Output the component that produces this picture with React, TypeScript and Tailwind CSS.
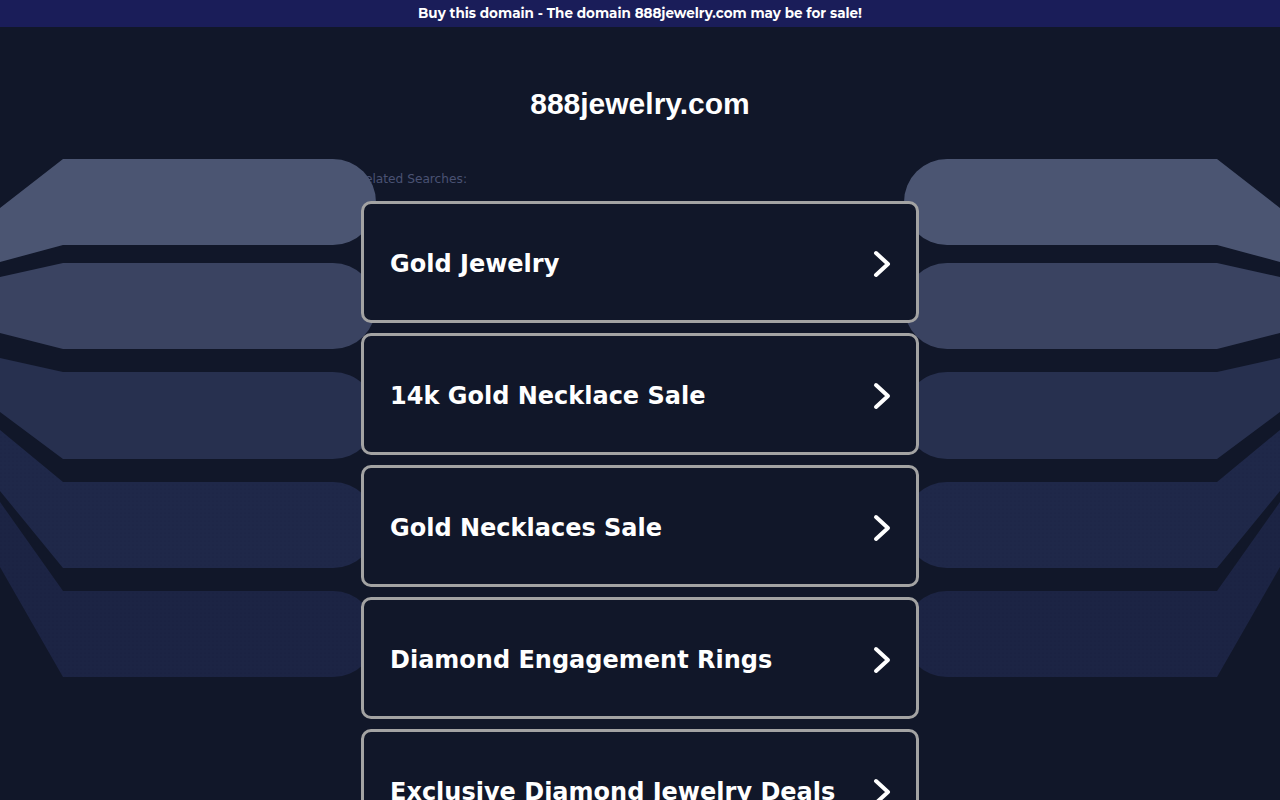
const searches = [
  "Gold Jewelry",
  "14k Gold Necklace Sale",
  "Gold Necklaces Sale",
  "Diamond Engagement Rings",
  "Exclusive Diamond Jewelry Deals",
];

// left-hand bands; the right side is the same set mirrored
const bands = [
  { d: "M0,208 L63,159 L333,159 A43,43 0 0 1 333,245 L63,245 L0,262 Z", fill: "#4b5572" },
  { d: "M0,277 L63,263 L333,263 A43,43 0 0 1 333,349 L63,349 L0,333 Z", fill: "#3a4361" },
  { d: "M0,358 L63,372 L333,372 A43.5,43.5 0 0 1 333,459 L63,459 L0,412 Z", fill: "#27304f" },
  { d: "M0,430 L63,482 L333,482 A43,43 0 0 1 333,568 L63,568 L0,491 Z", fill: "url(#dots4)" },
  { d: "M0,502 L63,591 L333,591 A43,43 0 0 1 333,677 L63,677 L0,567 Z", fill: "url(#dots5)" },
];

function Backdrop() {
  return (
    <svg
      className="pointer-events-none absolute left-0 top-0 z-10"
      width="1280"
      height="800"
      viewBox="0 0 1280 800"
    >
      <defs>
        <pattern id="dots4" width="4" height="4" patternUnits="userSpaceOnUse">
          <rect width="4" height="4" fill="#1f2849" />
          <circle cx="1" cy="1" r="0.6" fill="#182040" />
        </pattern>
        <pattern id="dots5" width="4" height="4" patternUnits="userSpaceOnUse">
          <rect width="4" height="4" fill="#1c2444" />
          <circle cx="1" cy="1" r="0.6" fill="#161d3b" />
        </pattern>
      </defs>
      <g>
        {bands.map((b, i) => (
          <path key={i} d={b.d} fill={b.fill} />
        ))}
      </g>
      <g transform="translate(1280,0) scale(-1,1)">
        {bands.map((b, i) => (
          <path key={i} d={b.d} fill={b.fill} />
        ))}
      </g>
    </svg>
  );
}

function Chevron() {
  return (
    <svg width="20" height="30" viewBox="0 0 20 30" className="shrink-0">
      <polyline
        points="4,4 16,15 4,26"
        fill="none"
        stroke="#ffffff"
        strokeWidth="4"
        strokeLinecap="round"
        strokeLinejoin="round"
      />
    </svg>
  );
}

export default function App() {
  return (
    <div className="relative h-[800px] w-[1280px] overflow-hidden bg-[#111729]">
      <div className="flex h-[27px] items-center justify-center bg-[#1a1d59] font-['Montserrat','Open_Sans',sans-serif] text-[13.5px] font-bold text-white">
        Buy this domain - The domain 888jewelry.com may be for sale!
      </div>

      <Backdrop />

      <div className="mx-auto flex w-[558px] flex-col">
        <h1 className="mt-[57px] text-center font-['Liberation_Sans',Arial,sans-serif] text-[30px] font-bold leading-[40px] text-white">
          888jewelry.com
        </h1>

        <p className="ml-[-4px] mt-[47px] font-['DejaVu_Sans',Verdana,sans-serif] text-[12.2px] leading-[16px] text-[#4a5273]">
          Related Searches:
        </p>

        <div className="relative z-20 mt-[14px] flex flex-col gap-[10px]">
          {searches.map((s) => (
            <div
              key={s}
              className="flex h-[122px] items-center justify-between rounded-[10px] border-[3px] border-[#a3a3a3] bg-[#111729] pl-[26px] pr-[24px] pt-[3px]"
            >
              <span className="font-['DejaVu_Sans',Verdana,sans-serif] text-[24px] font-bold text-white">
                {s}
              </span>
              <Chevron />
            </div>
          ))}
        </div>
      </div>
    </div>
  );
}
